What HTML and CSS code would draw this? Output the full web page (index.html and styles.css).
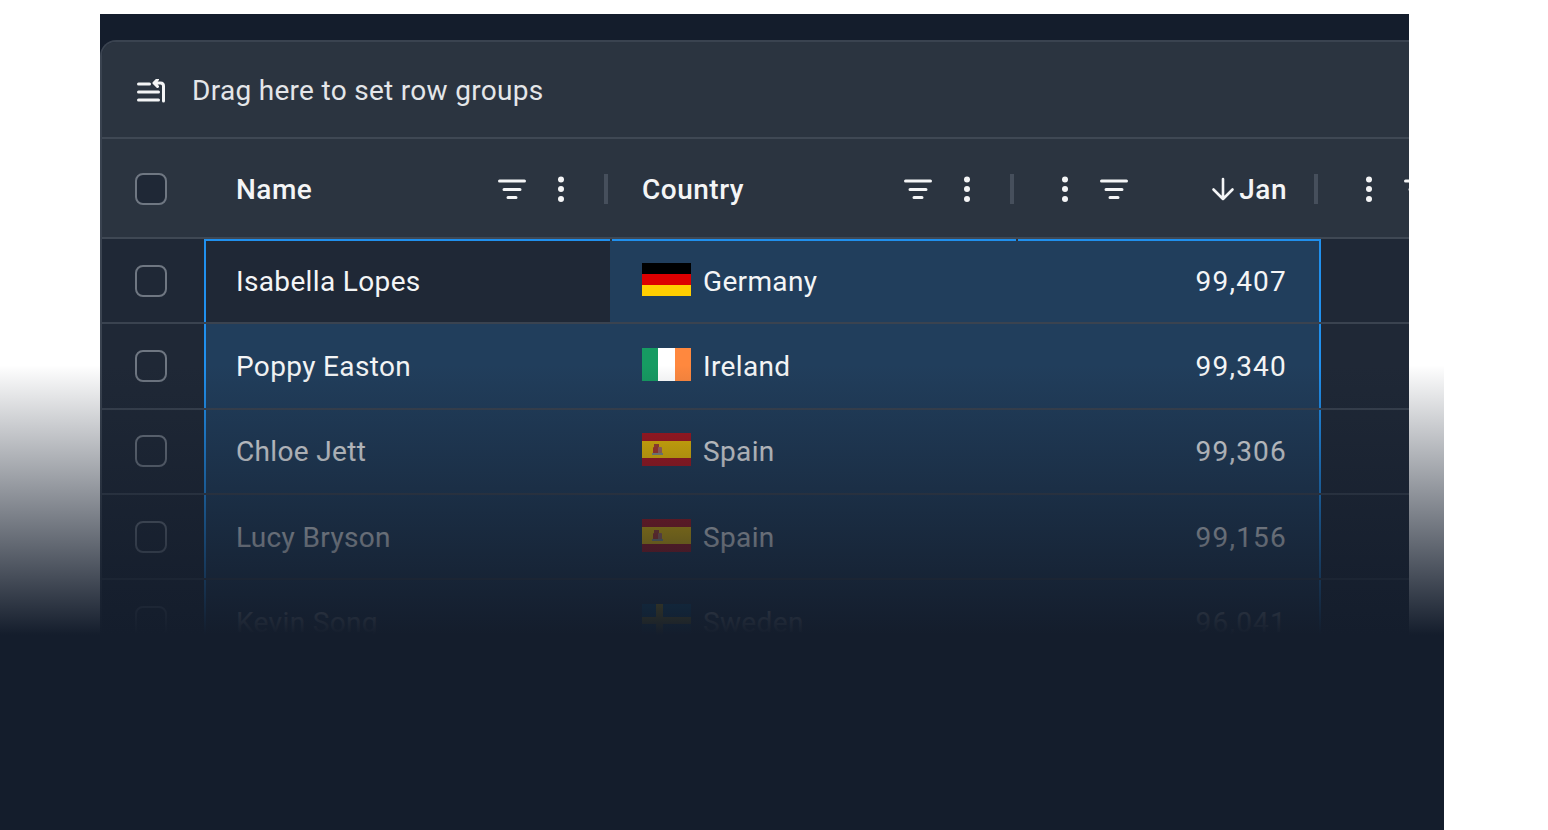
FILE: index.html
```html
<!DOCTYPE html>
<html lang="en">
<head>
    <meta charset="UTF-8">
    <meta name="viewport" content="width=device-width, initial-scale=1.0">
    <title>Data Grid</title>
    <link rel="stylesheet" href="styles.css">
</head>
<body>
    <!-- Shared icons and flags -->
    <svg class="icon-defs" aria-hidden="true">
        <symbol id="icon-filter" viewBox="0 0 28 20">
            <path d="M1.500 2h25M6 10.500h16M10 18.500h8" fill="none" stroke="currentColor" stroke-width="3" stroke-linecap="round"/>
        </symbol>
        <symbol id="icon-menu" viewBox="0 0 8 26">
            <circle cx="4" cy="3.500" r="3"/>
            <circle cx="4" cy="13" r="3"/>
            <circle cx="4" cy="23" r="3"/>
        </symbol>
        <symbol id="flag-de" viewBox="0 0 49 33">
            <rect width="49" height="11" fill="#000"/>
            <rect y="11" width="49" height="11" fill="#d00"/>
            <rect y="22" width="49" height="11" fill="#ffce00"/>
        </symbol>
        <symbol id="flag-ie" viewBox="0 0 49 33">
            <rect width="17" height="33" fill="#169b62"/>
            <rect x="16" width="17" height="33" fill="#fff"/>
            <rect x="33" width="16" height="33" fill="#ff883e"/>
        </symbol>
        <symbol id="flag-es" viewBox="0 0 49 33">
            <rect width="49" height="33" fill="#b5151d"/>
            <rect y="8" width="49" height="17" fill="#fdca00"/>
            <rect x="12" y="11" width="5" height="4" fill="#b5452f"/>
            <rect x="11" y="14" width="5" height="7" rx="1" fill="#c0392b"/>
            <rect x="16" y="14" width="4" height="7" rx="1" fill="#b8736a"/>
            <rect x="10" y="20" width="11" height="2" fill="#8f9a90"/>
        </symbol>
        <symbol id="flag-se" viewBox="0 0 49 33">
            <rect width="49" height="33" fill="#006aa7"/>
            <rect x="14" width="7" height="33" fill="#fecc00"/>
            <rect y="13" width="49" height="7" fill="#fecc00"/>
        </symbol>
    </svg>

    <div class="stage">
        <div class="grid">
            <div class="group-bar">
                <svg class="group-icon" viewBox="0 0 28 24" aria-hidden="true">
                    <path d="M1.500 5h11M1.500 13h20M1.500 21h20M26.500 22V7Q26.500 4 23.500 4H17.500M20.500 0.500L17 4l3.500 3.500" fill="none" stroke="currentColor" stroke-width="3" stroke-linecap="round" stroke-linejoin="round"/>
                </svg>
                <span>Drag here to set row groups</span>
            </div>

            <div class="header-row">
                <div class="check-cell"><span class="checkbox"></span></div>
                <div class="header-cell">
                    <span class="header-label">Name</span>
                    <svg class="filter-icon"><use href="#icon-filter"/></svg>
                    <svg class="menu-icon"><use href="#icon-menu"/></svg>
                    <span class="resize-bar"></span>
                </div>
                <div class="header-cell">
                    <span class="header-label">Country</span>
                    <svg class="filter-icon"><use href="#icon-filter"/></svg>
                    <svg class="menu-icon"><use href="#icon-menu"/></svg>
                    <span class="resize-bar"></span>
                </div>
                <div class="header-cell header-right">
                    <svg class="menu-icon"><use href="#icon-menu"/></svg>
                    <svg class="filter-icon"><use href="#icon-filter"/></svg>
                    <span class="header-label">
                        <svg class="sort-icon" viewBox="0 0 24 24" aria-hidden="true">
                            <path d="M12 2v20M2.500 12.500L12 22l9.500-9.500" fill="none" stroke="currentColor" stroke-width="2.600" stroke-linecap="round" stroke-linejoin="round"/>
                        </svg>
                        Jan
                    </span>
                    <span class="resize-bar"></span>
                </div>
                <div class="header-cell header-next">
                    <svg class="menu-icon"><use href="#icon-menu"/></svg>
                    <svg class="filter-icon"><use href="#icon-filter"/></svg>
                </div>
            </div>

            <div class="row row-first">
                <div class="check-cell"><span class="checkbox"></span></div>
                <div class="cell cell-name cell-plain">Isabella Lopes</div>
                <div class="cell cell-range"><svg class="flag"><use href="#flag-de"/></svg>Germany</div>
                <div class="cell cell-range cell-num">99,407</div>
                <div class="cell"></div>
            </div>
            <div class="row">
                <div class="check-cell"><span class="checkbox"></span></div>
                <div class="cell cell-name cell-range">Poppy Easton</div>
                <div class="cell cell-range"><svg class="flag"><use href="#flag-ie"/></svg>Ireland</div>
                <div class="cell cell-range cell-num">99,340</div>
                <div class="cell"></div>
            </div>
            <div class="row">
                <div class="check-cell"><span class="checkbox"></span></div>
                <div class="cell cell-name cell-range">Chloe Jett</div>
                <div class="cell cell-range"><svg class="flag"><use href="#flag-es"/></svg>Spain</div>
                <div class="cell cell-range cell-num">99,306</div>
                <div class="cell"></div>
            </div>
            <div class="row">
                <div class="check-cell"><span class="checkbox"></span></div>
                <div class="cell cell-name cell-range">Lucy Bryson</div>
                <div class="cell cell-range"><svg class="flag"><use href="#flag-es"/></svg>Spain</div>
                <div class="cell cell-range cell-num">99,156</div>
                <div class="cell"></div>
            </div>
            <div class="row">
                <div class="check-cell"><span class="checkbox"></span></div>
                <div class="cell cell-name cell-range">Kevin Song</div>
                <div class="cell cell-range"><svg class="flag"><use href="#flag-se"/></svg>Sweden</div>
                <div class="cell cell-range cell-num">96,041</div>
                <div class="cell"></div>
            </div>
        </div>
    </div>

    <div class="fade"></div>
</body>
</html>
```

FILE: styles.css
```css
/* Global Styles */
* {
    margin: 0;
    padding: 0;
    box-sizing: border-box;
}

body {
    font-family: 'Roboto', 'Noto Sans', sans-serif;
    background-color: #fff;
    color: #f4f5f6;
    height: 830px;
    overflow: hidden;
    position: relative;
}

.icon-defs {
    display: none;
}

/* Dark panel behind the grid */
.stage {
    width: 1309px;
    height: 816px;
    margin: 14px 0 0 100px;
    padding-top: 26px;
    background-color: #141d2c;
    overflow: hidden;
}

.grid {
    width: 1400px;
    height: 790px;
    background-color: #1f2836;
    border-top: 2px solid #3a4350;
    border-left: 2px solid #3a4350;
    border-top-left-radius: 16px;
    overflow: hidden;
}

/* Row group bar */
.group-bar {
    height: 97px;
    padding: 2px 0 0 35px;
    display: flex;
    align-items: center;
    gap: 27px;
    background-color: #2b3440;
    border-bottom: 2px solid #3f4854;
    font-size: 28px;
    letter-spacing: 0.3px;
    color: #e4e6e9;
}

.group-icon {
    width: 28px;
    height: 24px;
    color: #f4f5f6;
}

/* Header */
.header-row,
.row {
    display: grid;
    grid-template-columns: 102px 406px 406px 305px 1fr;
}

.header-row {
    height: 100px;
    padding-top: 2px;
    background-color: #2b3440;
    border-bottom: 2px solid #3f4854;
}

.check-cell {
    display: flex;
    align-items: center;
    padding-left: 33px;
}

.checkbox {
    width: 32px;
    height: 32px;
    border: 2px solid #6f7782;
    border-radius: 8px;
    background-color: #1f2836;
}

.header-cell {
    display: flex;
    align-items: center;
    padding-left: 32px;
    font-size: 28px;
    font-weight: 500;
    letter-spacing: 0.5px;
}

.header-label {
    flex-grow: 1;
}

.filter-icon {
    width: 28px;
    height: 20px;
    color: #f4f5f6;
}

.menu-icon {
    width: 8px;
    height: 26px;
    margin-left: 31px;
    fill: #f4f5f6;
}

.resize-bar {
    width: 4px;
    height: 30px;
    margin-left: 39px;
    margin-right: 2px;
    background-color: #464f5c;
}

.header-right {
    padding-left: 0;
}

.header-right .menu-icon {
    margin-left: 45px;
    margin-right: 31px;
}

.header-right .header-label {
    display: flex;
    align-items: center;
    justify-content: flex-end;
    gap: 4px;
}

.header-right .resize-bar {
    margin-left: 27px;
    margin-right: 3px;
}

.sort-icon {
    width: 24px;
    height: 24px;
}

.header-next {
    padding-left: 0;
}

.header-next .menu-icon {
    margin-left: 44px;
    margin-right: 31px;
}

/* Body rows */
.row {
    height: 85.33px;
    border-bottom: 2px solid #3a4350;
    font-size: 28px;
    letter-spacing: 0.35px;
}

.cell {
    display: flex;
    align-items: center;
    padding: 1px 0 0 32px;
    position: relative;
}

.cell-name {
    border-left: 2px solid #2090ee;
    padding-left: 30px;
}

.cell-range {
    background-color: #213e5c;
}

.cell-num {
    justify-content: flex-end;
    padding-right: 32px;
    border-right: 2px solid #2090ee;
    letter-spacing: 1.2px;
}

/* Top edge of the selected range */
.row-first .cell-name,
.row-first .cell-range {
    box-shadow: inset 0 2px 0 #2090ee;
}

/* Small gap in the top range line between columns */
.row-first .cell-range::before {
    content: "";
    position: absolute;
    top: 0;
    left: 0;
    width: 2px;
    height: 2px;
    background-color: #2b3440;
}

.flag {
    width: 49px;
    height: 33px;
    margin: 0 12px 4px 0;
    flex-shrink: 0;
}

/* Fade over the lower part of the page */
.fade {
    position: absolute;
    left: 0;
    top: 365px;
    width: 1444px;
    height: 465px;
    background: linear-gradient(to bottom, rgba(20, 29, 44, 0) 0%, #141d2c 58%);
}
```
